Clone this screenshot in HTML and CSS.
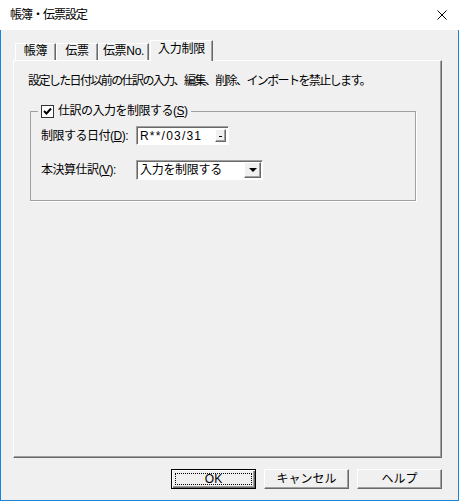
FILE: index.html
```html
<!DOCTYPE html>
<html lang="ja">
<head>
  <meta charset="UTF-8" />
  <title>帳簿・伝票設定</title>
  <link rel="stylesheet" href="styles.css">
</head>
<body>
  <div class="titlebar">
    <span class="title">帳簿・伝票設定</span>
    <svg class="close" width="10" height="10" viewBox="0 0 10 10">
      <path d="M0.5 0.5 L9.5 9.5 M9.5 0.5 L0.5 9.5" stroke="#000" stroke-width="1" fill="none"/>
    </svg>
  </div>

  <div class="client">
    <div class="tabs">
      <div class="tab tab-1">帳簿</div>
      <div class="tab tab-2">伝票</div>
      <div class="tab tab-3">伝票No.</div>
      <div class="tab active">入力制限</div>
    </div>

    <div class="panel">
      <p class="notice">設定した日付以前の仕訳の入力、編集、削除、インポートを禁止します。</p>

      <fieldset class="group">
        <legend class="check">
          <span class="box">
            <svg width="9" height="9" viewBox="0 0 9 9">
              <path d="M1 4 L3.5 6.5 L8 1.5" stroke="#000" stroke-width="2" fill="none"/>
            </svg>
          </span>
          <span>仕訳の入力を制限する(<u>S</u>)</span>
        </legend>

        <div class="row">
          <span class="label">制限する日付(<u>D</u>):</span>
          <div class="datefield">
            <span class="value">R**/03/31</span>
            <span class="spin"><i></i></span>
          </div>
        </div>

        <div class="row">
          <span class="label">本決算仕訳(<u>V</u>):</span>
          <div class="combo">
            <span class="value">入力を制限する</span>
            <span class="drop"><i></i></span>
          </div>
        </div>
      </fieldset>
    </div>

    <div class="buttons">
      <button class="btn default"><span class="focus">OK</span></button>
      <button class="btn">キャンセル</button>
      <button class="btn">ヘルプ</button>
    </div>
  </div>
</body>
</html>
```

FILE: styles.css
```css
* {
  box-sizing: border-box;
}

body {
  margin: 0;
  width: 459px;
  height: 501px;
  overflow: hidden;
  background-color: #f0f0f0;
  color: #000;
  font-family: "Liberation Sans", "Noto Sans CJK JP", sans-serif;
  font-size: 12px;
  line-height: 14px;
}

.titlebar {
  height: 30px;
  background-color: #fff;
  display: flex;
  align-items: center;
  justify-content: space-between;
  padding: 0 12px 0 10px;
}

.title {
  letter-spacing: -1px;
}

.client {
  height: 471px;
  border: 1px solid #1883d7;
  border-top: 0;
  padding: 10px 16px 0 12px;
}

/* tab strip */
.tabs {
  display: flex;
  align-items: flex-end;
  height: 21px;
  margin-bottom: -1px;
  position: relative;
  z-index: 1;
}

.tab {
  height: 17px;
  margin-bottom: 1px;
  text-align: center;
  line-height: 15px;
  border-top: 1px solid #fff;
  border-left: 1px solid #fff;
  border-right: 1px solid #696969;
  box-shadow: inset -1px 0 #a0a0a0;
  letter-spacing: -0.3px;
}

.tab-1 {
  width: 41px;
  margin-left: 2px;
}

.tab-2 {
  width: 42px;
}

.tab-3 {
  width: 51px;
}

.tab.active {
  width: 63px;
  height: 21px;
  margin-bottom: 0;
  margin-left: 1px;
  line-height: 17px;
  background-color: #f0f0f0;
}

/* page */
.panel {
  height: 398px;
  border-top: 1px solid #fff;
  border-left: 1px solid #fff;
  border-right: 1px solid #696969;
  border-bottom: 1px solid #696969;
  box-shadow: inset -1px -1px #a0a0a0;
  padding-top: 13px;
}

.notice {
  margin: 0 0 0 14px;
  letter-spacing: -1.6px;
}

.group {
  width: 386px;
  margin: 16px 0 0 16px;
  padding: 8px 10px 20px;
  border: 1px solid #a0a0a0;
  box-shadow: 1px 1px 0 #fff;
  min-width: 0;
}

.check {
  display: flex;
  align-items: center;
  gap: 4px;
  padding: 0 3px;
  margin-left: -3px;
  letter-spacing: -0.5px;
}

.box {
  width: 13px;
  height: 13px;
  border: 1px solid #333;
  background-color: #fff;
  display: flex;
  align-items: center;
  justify-content: center;
}

.row {
  display: flex;
  align-items: center;
}

.row + .row {
  margin-top: 15px;
}

.label {
  width: 95px;
  letter-spacing: -0.5px;
}

.datefield,
.combo {
  display: flex;
  align-items: center;
  justify-content: space-between;
  background-color: #fff;
  border: 1px solid;
  border-color: #a0a0a0 #fff #fff #a0a0a0;
  box-shadow: inset 1px 1px #696969;
  padding: 1px 1px 1px 3px;
}

.datefield {
  width: 93px;
  height: 19px;
}

.datefield .value {
  letter-spacing: 1.2px;
}

.combo {
  width: 127px;
  height: 20px;
}

.combo .value {
  letter-spacing: -0.3px;
}

.spin,
.drop {
  display: flex;
  align-items: center;
  justify-content: center;
  background-color: #f0f0f0;
  border: 1px solid;
  border-color: #fff #696969 #696969 #fff;
  box-shadow: inset -1px -1px #a0a0a0;
}

.spin {
  width: 11px;
  height: 13px;
  margin-right: 1px;
}

.spin i {
  width: 3px;
  height: 1px;
  margin-top: 2px;
  background-color: #000;
}

.drop {
  width: 17px;
  height: 16px;
}

.drop i {
  width: 0;
  height: 0;
  border-left: 4px solid transparent;
  border-right: 4px solid transparent;
  border-top: 4px solid #000;
}

/* dialog buttons */
.buttons {
  display: flex;
  justify-content: flex-end;
  gap: 8px;
  margin-top: 11px;
}

.btn {
  width: 85px;
  height: 20px;
  padding: 0;
  font: inherit;
  color: #000;
  background-color: #f0f0f0;
  border: 1px solid;
  border-color: #fff #696969 #696969 #fff;
  box-shadow: inset -1px -1px #a0a0a0;
}

.btn.default {
  border: 1px solid #000;
  box-shadow: inset 1px 1px #fff, inset -1px -1px #696969, inset -2px -2px #a0a0a0;
  padding: 3px;
}

.focus {
  display: block;
  height: 100%;
  border: 1px dotted #000;
  line-height: 10px;
}
```
